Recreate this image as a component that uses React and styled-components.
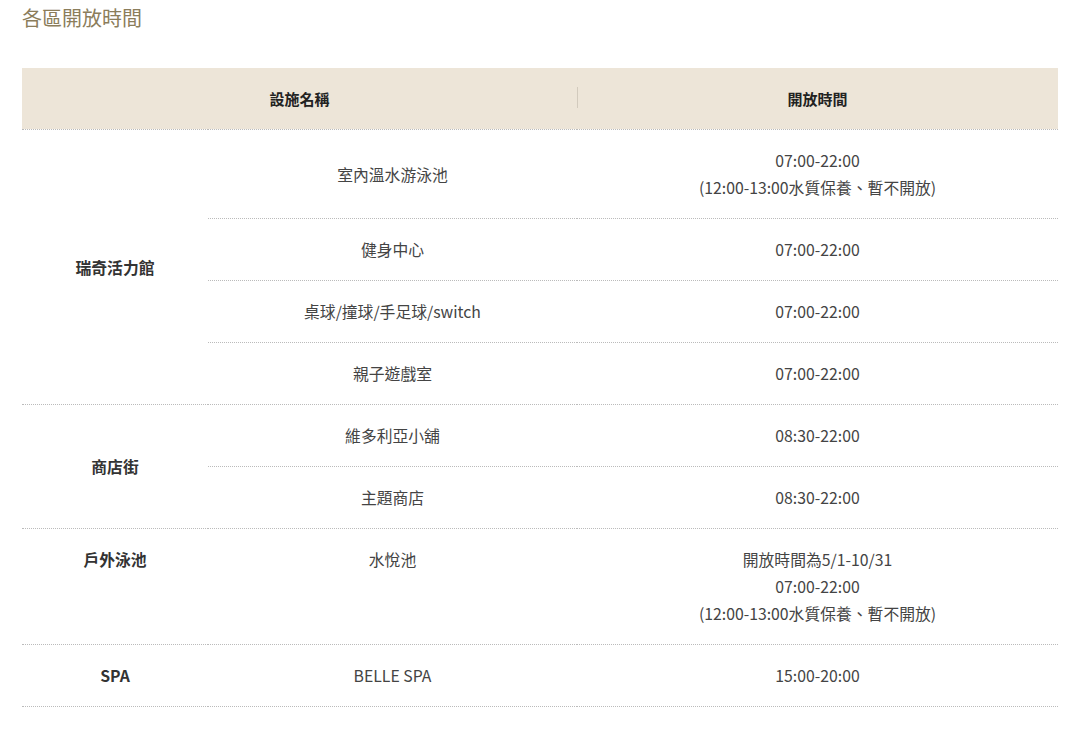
import styled, { createGlobalStyle } from "styled-components";

const GlobalStyle = createGlobalStyle`
  body {
    margin: 0;
    background: #fff;
    font-family: "Noto Sans CJK TC", "Noto Sans", sans-serif;
  }
`;

const Page = styled.div`
  padding: 0 22px 24px;
`;

const Title = styled.h2`
  margin: 0;
  padding-top: 3px;
  font-size: 20px;
  line-height: 30px;
  font-weight: 400;
  color: #8b7d5b;
`;

const Table = styled.table`
  width: 100%;
  margin-top: 35px;
  border-collapse: collapse;
  table-layout: fixed;
  font-size: 15.8px;
  color: #444;
`;

const HeadCell = styled.th`
  position: relative;
  height: 61px;
  padding: 0;
  background: #ede5d8;
  font-size: 15px;
  font-weight: 700;
  color: #222;
  border-bottom: 1px dotted #bbb;

  & + &::before {
    content: "";
    position: absolute;
    left: 0;
    top: 19px;
    height: 21px;
    border-left: 1px solid #d2cabd;
  }
`;

const Row = styled.tr`
  border-bottom: 1px dotted #bbb;
`;

const Cell = styled.td`
  padding: 17px 8px;
  text-align: center;
  line-height: 27px;
  vertical-align: ${(p) => (p.$top ? "top" : "middle")};
  border-bottom: 1px dotted #bbb;
`;

const GroupCell = styled(Cell)`
  font-weight: 700;
  color: #333;
`;

const Line = styled.div``;

const pool = ["07:00-22:00", "(12:00-13:00水質保養、暫不開放)"];

const groups = [
  {
    name: "瑞奇活力館",
    items: [
      { name: "室內溫水游泳池", time: pool },
      { name: "健身中心", time: ["07:00-22:00"] },
      { name: "桌球/撞球/手足球/switch", time: ["07:00-22:00"] },
      { name: "親子遊戲室", time: ["07:00-22:00"] },
    ],
  },
  {
    name: "商店街",
    items: [
      { name: "維多利亞小舖", time: ["08:30-22:00"] },
      { name: "主題商店", time: ["08:30-22:00"] },
    ],
  },
  {
    name: "戶外泳池",
    top: true,
    items: [{ name: "水悅池", time: ["開放時間為5/1-10/31", ...pool] }],
  },
  {
    name: "SPA",
    items: [{ name: "BELLE SPA", time: ["15:00-20:00"] }],
  },
];

export default function App() {
  return (
    <Page>
      <GlobalStyle />
      <Title>各區開放時間</Title>
      <Table>
        <colgroup>
          <col style={{ width: 186 }} />
          <col style={{ width: 369 }} />
          <col />
        </colgroup>
        <thead>
          <tr>
            <HeadCell colSpan={2}>設施名稱</HeadCell>
            <HeadCell>開放時間</HeadCell>
          </tr>
        </thead>
        <tbody>
          {groups.map((g) =>
            g.items.map((item, i) => (
              <Row key={g.name + item.name}>
                {i === 0 && (
                  <GroupCell rowSpan={g.items.length} $top={g.top}>
                    {g.name}
                  </GroupCell>
                )}
                <Cell $top={g.top}>{item.name}</Cell>
                <Cell>
                  {item.time.map((t) => (
                    <Line key={t}>{t}</Line>
                  ))}
                </Cell>
              </Row>
            ))
          )}
        </tbody>
      </Table>
    </Page>
  );
}
